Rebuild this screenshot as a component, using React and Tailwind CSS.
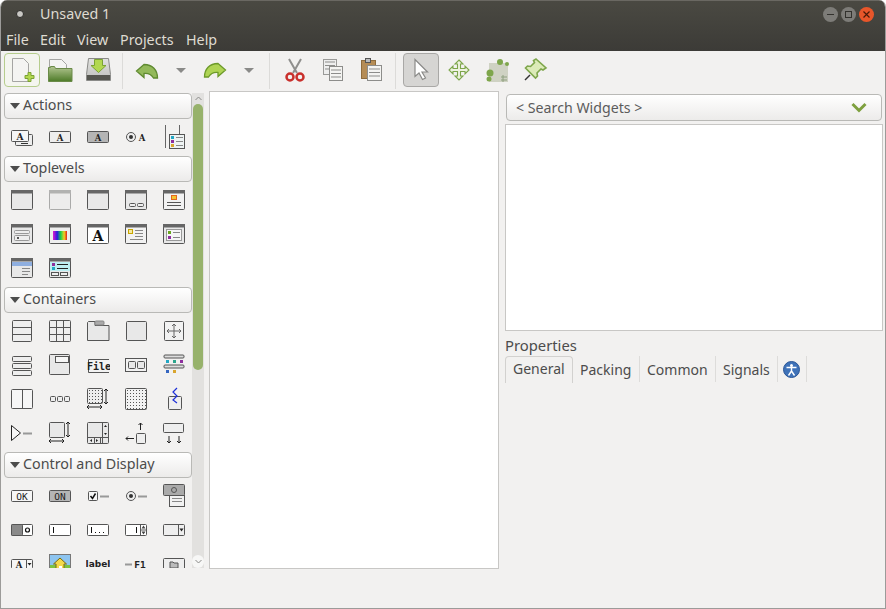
import React from "react";

const FONT = "font-['Noto_Sans',sans-serif]";

const Box = ({ children, w = 24, h = 24 }) => (
  <svg width={w} height={h} viewBox={`0 0 ${w} ${h}`} fill="none" stroke="#555" strokeWidth="1">
    {children}
  </svg>
);

const Glyph = ({ x, y, s = 10, c = "#222", serif = true, weight = 700, children }) => (
  <text
    x={x}
    y={y}
    fontSize={s}
    fontWeight={weight}
    fontFamily={serif ? "DejaVu Serif, serif" : "DejaVu Sans Mono, monospace"}
    fill={c}
    stroke="none"
    textAnchor="middle"
  >
    {children}
  </text>
);

const Win = ({ fill = "#e8e8e8", children }) => (
  <>
    <rect x="1.5" y="2.5" width="21" height="19" rx="1" fill={fill} />
    <rect x="1" y="2" width="22" height="3.5" fill="#666" stroke="none" />
    {children}
  </>
);

const Bar = ({ x, y, w, c = "#888" }) => <path d={`M${x} ${Number(y) + 0.5}h${w}`} stroke={c} />;
const Sq = ({ x, y, c, s = 3 }) => <rect x={x} y={y} width={s} height={s} fill={c} stroke="none" />;
const Arrow = ({ d, c = "#222" }) => <path d={d} stroke={c} />;

const dots = (x0, y0, nx, ny) => {
  const out = [];
  for (let i = 0; i < nx; i++) {
    for (let j = 0; j < ny; j++) {
      out.push(<rect key={`${i}-${j}`} x={x0 + i * 3} y={y0 + j * 3} width="1" height="1" fill="#555" stroke="none" />);
    }
  }
  return out;
};

const actions = [
  <>
    <rect x="5.5" y="9.5" width="17" height="11" rx="1" fill="#eee" />
    <rect x="1.5" y="5.5" width="17" height="11" rx="1" fill="#f6f6f6" />
    <Glyph x="10" y="14.500" s="9">A</Glyph>
    <Bar x="11" y="18" w="7" c="#333" />
  </>,
  <>
    <rect x="1.5" y="6.5" width="21" height="11" rx="1" fill="#eee" />
    <Glyph x="12" y="15.500" s="8.500">A</Glyph>
  </>,
  <>
    <rect x="1.5" y="6.5" width="21" height="11" rx="1" fill="#b5b5b5" />
    <Glyph x="12" y="15.500" s="8.500">A</Glyph>
  </>,
  <>
    <circle cx="7" cy="12" r="4.500" fill="#eee" />
    <circle cx="7" cy="12" r="2" fill="#333" stroke="none" />
    <Glyph x="18" y="15.500" s="8.500">A</Glyph>
  </>,
  <>
    <path d="M3.500 0v23M17.500 0v9" stroke="#666" />
    <rect x="7.500" y="9.500" width="15" height="14" fill="#eef3f3" />
    <Sq x="9" y="11" c="#22a6c4" />
    <Sq x="9" y="15" c="#8e2f9e" />
    <Sq x="9" y="19" c="#d9a52e" />
    <Bar x="14" y="12" w="7" />
    <Bar x="14" y="16" w="7" />
    <Bar x="14" y="20" w="7" />
  </>,
];

const toplevels = [
  <Win />,
  <g opacity="0.45"><Win /></g>,
  <Win />,
  <Win>
    <rect x="5.500" y="15.500" width="6" height="3" rx="1" fill="#eee" />
    <rect x="13.500" y="15.500" width="6" height="3" rx="1" fill="#eee" />
  </Win>,
  <Win fill="#f2f2f2">
    <rect x="9.500" y="7.500" width="5" height="4" fill="#f4c430" stroke="#e2661e" />
    <Bar x="5" y="14" w="14" c="#555" />
    <Bar x="5" y="17" w="14" c="#555" />
  </Win>,
  <Win>
    <rect x="4.500" y="8.500" width="15" height="3" rx="1" fill="#eee" stroke="#999" />
    <rect x="4.500" y="13.500" width="15" height="5" rx="1" fill="#eee" stroke="#999" />
    <Sq x="7" y="15" c="#555" s="2" />
  </Win>,
  <Win fill="#eee">
    <defs>
      <linearGradient id="rainbow" x1="0" x2="1" y1="0" y2="0">
        <stop offset="0" stopColor="#e01bd0" />
        <stop offset="0.3" stopColor="#2a1be0" />
        <stop offset="0.55" stopColor="#1bd04a" />
        <stop offset="0.8" stopColor="#f0d020" />
        <stop offset="1" stopColor="#e0201b" />
      </linearGradient>
    </defs>
    <rect x="5" y="9" width="14" height="9" fill="url(#rainbow)" stroke="none" />
  </Win>,
  <Win fill="#fff">
    <Glyph x="12" y="19" s="14" c="#111">A</Glyph>
  </Win>,
  <Win fill="#f2f2f2">
    <rect x="4.500" y="7.500" width="4" height="4" fill="#f4e8a0" stroke="#c7a500" />
    <Bar x="11" y="8" w="8" />
    <Bar x="11" y="11" w="8" />
    <Bar x="11" y="14" w="8" />
    <Bar x="6" y="17" w="13" />
  </Win>,
  <Win>
    <rect x="4.500" y="7.500" width="15" height="11" fill="#f6f6f6" stroke="#999" />
    <Sq x="6" y="9" c="#6aa51e" />
    <Sq x="6" y="14" c="#8e2f9e" />
    <Bar x="11" y="10" w="7" />
    <Bar x="11" y="15" w="7" />
  </Win>,
  <Win>
    <rect x="2" y="6" width="20" height="4" fill="#8fafe0" stroke="none" />
    <Bar x="12" y="12" w="8" />
    <Bar x="12" y="15" w="8" />
    <Bar x="12" y="18" w="6" />
  </Win>,
  <Win>
    <rect x="2" y="6" width="20" height="9" fill="#bdeef2" stroke="none" />
    <Sq x="4" y="7" c="#8e2f9e" />
    <Sq x="4" y="11" c="#22a6c4" />
    <Bar x="9" y="8" w="11" c="#222" />
    <Bar x="9" y="12" w="11" c="#222" />
    <rect x="3.500" y="16.500" width="7" height="3" fill="#eee" />
    <rect x="12.500" y="16.500" width="7" height="3" fill="#eee" />
  </Win>,
];

const containers = [
  <>
    <rect x="2.500" y="1.500" width="19" height="21" rx="1" fill="#eee" />
    <path d="M2.500 8.500h19M2.500 15.500h19" />
  </>,
  <>
    <rect x="1.500" y="1.500" width="21" height="21" rx="1" fill="#eee" />
    <path d="M8.500 1.500v21M15.500 1.500v21M1.500 8.500h21M1.500 15.500h21" />
  </>,
  <>
    <path d="M1.500 21.500v-18l1-1h6.500v4h14v15z" fill="#e8e8e8" />
    <rect x="9" y="2" width="9" height="4" rx="1" fill="#aaa" stroke="#888" />
  </>,
  <rect x="2.500" y="2.500" width="20" height="19" rx="1" fill="#e8e8e8" />,
  <>
    <rect x="2.500" y="2.500" width="19" height="19" rx="1" fill="#f2f2f2" />
    <path d="M12 5v14M5 12h14M10 7l2-2 2 2M10 17l2 2 2-2M7 10l-2 2 2 2M17 10l2 2-2 2" stroke="#666" />
  </>,
  <>
    <rect x="2.500" y="3.500" width="19" height="5" rx="1" fill="#eee" />
    <rect x="2.500" y="10.500" width="19" height="5" rx="1" fill="#eee" />
    <rect x="2.500" y="17.500" width="19" height="5" rx="1" fill="#eee" />
  </>,
  <>
    <rect x="1.500" y="1.500" width="20" height="20" rx="1" fill="#e8e8e8" />
    <rect x="7.500" y="3.500" width="13" height="6" fill="#f6f6f6" />
  </>,
  <>
    <path d="M23 6.500H2.500v13H23" fill="#f2f2f2" />
    <text x="13" y="16.500" fontSize="10" fontWeight="700" fontFamily="DejaVu Sans Mono, monospace" fill="#222" stroke="none" textAnchor="middle">File</text>
  </>,
  <>
    <rect x="1.500" y="5.500" width="21" height="13" fill="#f2f2f2" />
    <rect x="4.500" y="8.500" width="7" height="7" rx="1" fill="#e8e8e8" />
    <rect x="13.500" y="8.500" width="7" height="7" rx="1" fill="#e8e8e8" />
  </>,
  <>
    <rect x="2" y="2" width="20" height="3" rx="1" fill="#ddd" />
    <rect x="2" y="12" width="20" height="3" rx="1" fill="#ddd" />
    <Sq x="4" y="7" c="#22a6c4" />
    <Sq x="11" y="7" c="#2ca58d" />
    <Sq x="18" y="7" c="#8e2f9e" />
    <Sq x="4" y="17" c="#3565c0" />
    <Sq x="11" y="17" c="#d9a52e" />
  </>,
  <>
    <rect x="1.500" y="2.500" width="21" height="19" rx="1" fill="#f6f6f6" />
    <path d="M12.500 2.500v19" />
  </>,
  <>
    <rect x="2.500" y="9.500" width="5" height="5" rx="1" fill="#eee" />
    <rect x="9.500" y="9.500" width="5" height="5" rx="1" fill="#eee" />
    <rect x="16.500" y="9.500" width="5" height="5" rx="1" fill="#eee" />
  </>,
  <>
    <rect x="1.500" y="1.500" width="15" height="15" rx="1" fill="#eee" />
    {dots(3, 3, 5, 5)}
    <Arrow d="M20 2v15M18 4l2-2 2 2M18 15l2 2 2-2" />
    <Arrow d="M1 20h15M3 18l-2 2 2 2M14 18l2 2-2 2" />
  </>,
  <>
    <rect x="1.500" y="1.500" width="21" height="21" rx="1" fill="#f2f2f2" />
    {dots(3, 3, 7, 7)}
  </>,
  <>
    <rect x="6.500" y="9.500" width="13" height="13" rx="1" fill="#eee" />
    <path d="M15 1l-4 4 4 4-4 4 4 3" stroke="#1c2fd8" strokeWidth="1.200" />
  </>,
  <>
    <path d="M1.500 4.500v15l9-7.500z" fill="#f6f6f6" stroke="#222" />
    <path d="M13 12.500h9" stroke="#999" strokeWidth="2" />
  </>,
  <>
    <rect x="1.500" y="1.500" width="15" height="15" rx="1" fill="#e8e8e8" />
    <Arrow d="M20 1v15M18 3l2-2 2 2M18 14l2 2 2-2" />
    <Arrow d="M1 20h15M3 18l-2 2 2 2M14 18l2 2-2 2" />
  </>,
  <>
    <rect x="1.500" y="1.500" width="21" height="21" rx="1" fill="#e8e8e8" />
    <path d="M16.500 1.500v21M1.500 16.500h21" />
    <path d="M19.500 4l-1.500 2h3zM19.500 14l-1.500-2h3z" fill="#222" stroke="none" />
    <path d="M4 19.500l2-1.500v3zM12 19.500l-2-1.500v3z" fill="#222" stroke="none" />
    <path d="M8.500 16.500v6M14.500 16.500v6" />
  </>,
  <>
    <rect x="12.500" y="12.500" width="9" height="10" rx="1" fill="#eee" />
    <Arrow d="M16.500 9V2M14.500 4l2-2 2 2" />
    <Arrow d="M10 17.500H2M4 15.500l-2 2 2 2" />
  </>,
  <>
    <rect x="1.500" y="2.500" width="20" height="9" rx="1" fill="#eee" />
    <Arrow d="M7 15v7M5 20l2 2 2-2" />
    <Arrow d="M17 15v7M15 20l2 2 2-2" />
  </>,
];

const controls = [
  <>
    <rect x="1.500" y="6.500" width="21" height="11" rx="1" fill="#f6f6f6" />
    <Glyph x="12" y="15.500" s="9.500" serif={false} weight={400}>OK</Glyph>
  </>,
  <>
    <rect x="1.500" y="6.500" width="21" height="11" rx="1" fill="#b5b5b5" />
    <Glyph x="12" y="15.500" s="9.500" serif={false} weight={400}>ON</Glyph>
  </>,
  <>
    <rect x="2.500" y="7.500" width="9" height="9" rx="1" fill="#f6f6f6" />
    <path d="M4.500 12l2 2.500 3-5" stroke="#111" strokeWidth="1.500" />
    <path d="M14 12.500h9" stroke="#999" strokeWidth="2" />
  </>,
  <>
    <circle cx="7" cy="12" r="4.500" fill="#eee" />
    <circle cx="7" cy="12" r="2" fill="#333" stroke="none" />
    <path d="M14 12.500h9" stroke="#999" strokeWidth="2" />
  </>,
  <>
    <rect x="1.500" y="0.500" width="21" height="11" rx="1" fill="#aaa" />
    <circle cx="12" cy="6" r="2.500" />
    <rect x="7.500" y="11.500" width="15" height="11" fill="#f2f2f2" />
    <Bar x="10" y="14" w="10" />
    <Bar x="10" y="17" w="10" />
  </>,
  <>
    <rect x="1.500" y="6.500" width="21" height="11" rx="1" fill="#fff" />
    <rect x="1.500" y="6.500" width="11" height="11" rx="1" fill="#8a8a8a" />
    <circle cx="17.500" cy="12" r="2" stroke="#111" strokeWidth="1.200" />
  </>,
  <>
    <rect x="1.500" y="6.500" width="21" height="11" rx="1" fill="#fff" />
    <path d="M5.500 9v6" stroke="#111" />
  </>,
  <>
    <rect x="1.500" y="6.500" width="21" height="11" rx="1" fill="#fff" />
    <path d="M5.500 9v6" stroke="#111" />
    <path d="M9 14.500h1M13 14.500h1M17 14.500h1" stroke="#111" />
  </>,
  <>
    <rect x="1.500" y="6.500" width="21" height="11" rx="1" fill="#fff" />
    <path d="M12.500 9v6" stroke="#111" />
    <path d="M16.500 6.500v11M16.500 12h6" />
    <path d="M19.500 7.500l-2 3h4zM19.500 16.500l-2-3h4z" fill="#444" stroke="none" />
  </>,
  <>
    <rect x="1.500" y="6.500" width="21" height="11" rx="1" fill="#eee" />
    <path d="M16.500 6.500v11" />
    <path d="M17.500 10.500h4l-2 3z" fill="#222" stroke="none" />
  </>,
  <>
    <rect x="1.500" y="7.500" width="21" height="9" rx="1" fill="#f6f6f6" />
    <path d="M16.500 7.500v9" />
    <path d="M17.500 11h4l-2 2.500z" fill="#222" stroke="none" />
    <Glyph x="9" y="15.500" s="8.500">A</Glyph>
  </>,
  <>
    <rect x="1.500" y="2.500" width="21" height="20" fill="#8ec5f0" stroke="#777" />
    <path d="M2 13h20v9H2z" fill="#7dc242" stroke="none" />
    <path d="M5.500 12L12 6l6.500 6H16v10H8V12z" fill="#f3d94c" stroke="#7a6a10" />
    <rect x="11" y="14" width="3" height="8" fill="#fff" stroke="none" />
  </>,
  <text x="12" y="15" fontSize="9" fontWeight="700" fontFamily="DejaVu Sans, sans-serif" fill="#222" stroke="none" textAnchor="middle">label</text>,
  <>
    <path d="M1 12.500h7" stroke="#999" strokeWidth="2" />
    <Glyph x="16" y="15.500" s="9.500" serif={false}>F1</Glyph>
  </>,
  <>
    <rect x="1.500" y="6.500" width="21" height="14" rx="1" fill="#eee" />
    <path d="M8 10h3l1 1h4v5H8z" fill="#bbb" />
  </>,
];

const Section = ({ title, icons }) => (
  <>
    <div className="ml-px flex h-[26px] w-[188px] shrink-0 items-center rounded-[4px] border border-[#b9b9b6] bg-gradient-to-b from-white to-[#ecebea] pb-[2px] pl-[5px] text-[14.3px] text-[#4c4c4c]">
      <span className="mr-[3px] mt-[2px] h-0 w-0 border-x-[5px] border-t-[6px] border-x-transparent border-t-[#4c4c4c]" />
      {title}
    </div>
    <div className="grid w-[190px] shrink-0 auto-rows-[34px] grid-cols-[repeat(5,38px)] pb-[2px] pt-px">
      {icons.map((icon, i) => (
        <div key={i} className="flex items-center justify-center">
          <Box>{icon}</Box>
        </div>
      ))}
    </div>
  </>
);

const ToolBtn = ({ children, w = "w-[38px]", state }) => (
  <div className={`flex ${w} h-[34px] shrink-0 items-center justify-center`}>
    {state === "hover" && (
      <div className="flex h-[34px] w-[36px] items-center justify-center rounded-[4px] border border-[#b6cd8d] bg-[#f4f5ef]">
        {children}
      </div>
    )}
    {state === "active" && (
      <div className="flex h-[34px] w-[36px] items-center justify-center rounded-[4px] border border-[#a9a8a6] bg-[#d6d5d3]">
        {children}
      </div>
    )}
    {!state && children}
  </div>
);

const Sep = () => (
  <div className="flex h-[34px] w-[10px] shrink-0 justify-center">
    <div className="h-[36px] w-px bg-[#dcdbd9]" />
  </div>
);

const Drop = () => (
  <ToolBtn w="w-[30px]">
    <span className="h-0 w-0 border-x-[5px] border-t-[5px] border-x-transparent border-t-[#8a8a88]" />
  </ToolBtn>
);

const T = ({ children }) => (
  <svg width="32" height="32" viewBox="0 0 32 32" fill="none">
    {children}
  </svg>
);

const Page = ({ x, y, w, h }) => (
  <path d={`M${x + 0.5} ${y + 0.5}h${w - 5}l5 5v${h - 5}h-${w}z`} fill="#f4f4f2" stroke="#a5a5a3" />
);

const Lines = ({ x, y, w, n }) =>
  Array.from({ length: n }, (_, i) => <path key={i} d={`M${x} ${y + i * 3.5}h${w}`} stroke="#8d8d8b" />);

const toolIcons = {
  add: (
    <T>
      <Page x={6} y={4} w={16} h={23} />
      <path d="M22 18.500h3v3h3v3h-3v3h-3v-3h-3v-3h3z" fill="#b2d84f" stroke="#7ba233" />
    </T>
  ),
  open: (
    <T>
      <defs>
        <linearGradient id="folder" x1="0" x2="0" y1="0" y2="1">
          <stop offset="0" stopColor="#b3c691" />
          <stop offset="1" stopColor="#4d7a28" />
        </linearGradient>
      </defs>
      <Page x={5} y={5} w={17} h={16} />
      <path d="M4.500 13.500h2v-1h4l1 2h16.500v13h-23.500z" fill="url(#folder)" stroke="#6a8a48" />
    </T>
  ),
  save: (
    <T>
      <defs>
        <linearGradient id="disc" x1="0" x2="0" y1="0" y2="1">
          <stop offset="0" stopColor="#e2e2e0" />
          <stop offset="1" stopColor="#bdbdbb" />
        </linearGradient>
      </defs>
      <path d="M6.500 4.500h20l2 16v6h-24v-6z" fill="url(#disc)" stroke="#8a8a88" />
      <path d="M5 21h23v5H5z" fill="#55554f" />
      <path d="M12.500 5.500h8v6h3.500l-7.500 7-7.500-7h3.500z" fill="#b2d84f" stroke="#7ba233" />
    </T>
  ),
  undo: (
    <T>
      <path d="M13 10.500L5.500 17l7.500 6.500v-4c4-.5 7 .5 9.500 4.500h4c0-8-5-13.500-13.500-13.500z" fill="#93b95a" stroke="#5f8a30" strokeWidth="1.300" />
    </T>
  ),
  redo: (
    <T>
      <path d="M19 9.500L26.500 16 19 22.500v-4c-4-.5-7 .5-9.500 4.500h-4c0-8 5-13.500 13.500-13.500z" fill="#afd454" stroke="#6d9a2a" strokeWidth="1.300" />
    </T>
  ),
  cut: (
    <T>
      <path d="M10 5l8 14M22 5l-8 14" stroke="#8f8f8d" strokeWidth="2" />
      <circle cx="11" cy="23" r="3.500" stroke="#c9302c" strokeWidth="2.500" />
      <circle cx="21" cy="23" r="3.500" stroke="#c9302c" strokeWidth="2.500" />
    </T>
  ),
  copy: (
    <T>
      <rect x="6.500" y="5.500" width="13" height="15" fill="#eee" stroke="#9a9a98" />
      <Lines x={8} y={8} w={10} n={3} />
      <rect x="12.500" y="12.500" width="13" height="14" fill="#f4f4f2" stroke="#8d8d8b" />
      <Lines x={14} y={16} w={10} n={3} />
    </T>
  ),
  paste: (
    <T>
      <rect x="6.500" y="6.500" width="14" height="18" fill="#b58c55" stroke="#8f6c3c" />
      <rect x="10.500" y="4.500" width="5" height="4" fill="#bbb" stroke="#555" />
      <rect x="12.500" y="11.500" width="14" height="15" fill="#f4f4f2" stroke="#8d8d8b" />
      <Lines x={14} y={15} w={11} n={3} />
    </T>
  ),
  select: (
    <T>
      <path d="M10 5.500v17l4-3.500 3.500 6.500 3-1.500-3.500-6h5.500z" fill="#fff" stroke="#8a8a88" strokeWidth="1.200" />
    </T>
  ),
  move: (
    <T>
      <path d="M16 6l4 4h-2.500v4.500H22V12l4 4-4 4v-2.500h-4.500V22H20l-4 4-4-4h2.500v-4.500H10V20l-4-4 4-4v2.500h4.500V10H12z" fill="#eef3e0" stroke="#7ea64b" strokeWidth="1.100" />
    </T>
  ),
  resize: (
    <T>
      <rect x="8" y="9" width="19" height="19" fill="#cfd2c3" />
      <path d="M20 23h6M20 26h6M22 21v7" stroke="#8fa080" />
      <circle cx="19" cy="8" r="3" fill="#7ea64b" />
      <circle cx="9" cy="19" r="3.500" fill="#7ea64b" />
      <circle cx="8" cy="25" r="2.500" fill="#7ea64b" />
      <circle cx="26" cy="10" r="2" fill="#7ea64b" />
    </T>
  ),
  pin: (
    <T>
      <path d="M17 5l10 9-3 2-2-1-4 4 .5 3-2 2-10-10 2-2 3 .5 4-4-1-2z" fill="#dcebb8" stroke="#7ea64b" strokeWidth="1.600" />
      <path d="M6 26l5-5" stroke="#333" strokeWidth="1.500" />
    </T>
  ),
};

const Tab = ({ label, w, pl }) => (
  <div className={`flex h-[26px] items-center border-r border-[#dddcda] ${w} ${pl} text-[14px] text-[#4c4c4c]`}>
    {label}
  </div>
);

export default function App() {
  return (
    <div className={`${FONT} flex h-[609px] w-[886px] flex-col overflow-hidden rounded-t-[7px] border-x border-b border-[#9c9b99] bg-[#f2f1f0]`}>
      <div className="-mx-px h-[51px] shrink-0 border-t border-[#6a6862] bg-gradient-to-b from-[#4a4942] to-[#3c3b37] text-[14.3px] text-[#dfdbd2]">
        <div className="flex h-[26px] items-center pb-px pl-[14px] pr-[12px]">
          <span className="flex h-[12px] w-[12px] items-center justify-center">
            <span className="h-[8px] w-[8px] rounded-full border border-[#2a2926] bg-[#c9c8c4]" />
          </span>
          <span className="ml-[14px] flex-1">Unsaved 1</span>
          <div className="mt-px flex gap-[3px]">
            <span className="flex h-[15px] w-[15px] items-center justify-center rounded-full bg-[#7d7c78]">
              <span className="h-px w-[7px] bg-[#33322e]" />
            </span>
            <span className="flex h-[15px] w-[15px] items-center justify-center rounded-full bg-[#7d7c78]">
              <span className="h-[7px] w-[7px] border border-[#33322e]" />
            </span>
            <span className="flex h-[15px] w-[15px] items-center justify-center rounded-full bg-[#e8562a]">
              <svg width="7" height="7" viewBox="0 0 7 7" stroke="#4a1a08" strokeWidth="1.200"><path d="M0.500 0.500l6 6M6.500 0.500l-6 6" /></svg>
            </span>
          </div>
        </div>
        <div className="flex h-[24px] items-center pl-[6px] pt-px">
          <span className="w-[34px]">File</span>
          <span className="w-[37px]">Edit</span>
          <span className="w-[43px]">View</span>
          <span className="w-[66px]">Projects</span>
          <span>Help</span>
        </div>
      </div>

      <div className="flex h-[40px] shrink-0 items-start pl-[2px] pt-[2px]">
        <ToolBtn state="hover">{toolIcons.add}</ToolBtn>
        <ToolBtn>{toolIcons.open}</ToolBtn>
        <ToolBtn>{toolIcons.save}</ToolBtn>
        <Sep />
        <div className="w-px" />
        <ToolBtn>{toolIcons.undo}</ToolBtn>
        <Drop />
        <ToolBtn>{toolIcons.redo}</ToolBtn>
        <Drop />
        <Sep />
        <div className="w-[2px]" />
        <ToolBtn>{toolIcons.cut}</ToolBtn>
        <ToolBtn>{toolIcons.copy}</ToolBtn>
        <ToolBtn>{toolIcons.paste}</ToolBtn>
        <Sep />
        <div className="w-[2px]" />
        <ToolBtn state="active">{toolIcons.select}</ToolBtn>
        <ToolBtn>{toolIcons.move}</ToolBtn>
        <ToolBtn>{toolIcons.resize}</ToolBtn>
        <ToolBtn>{toolIcons.pin}</ToolBtn>
      </div>

      <div className="flex h-[478px] shrink-0">
        <aside className="mt-[2px] flex h-[475px] w-[191px] shrink-0 flex-col overflow-hidden pl-[2px]">
          <Section title="Actions" icons={actions} />
          <Section title="Toplevels" icons={toplevels} />
          <Section title="Containers" icons={containers} />
          <Section title="Control and Display" icons={controls} />
        </aside>

        <div className="mt-[2px] flex h-[475px] w-[12px] shrink-0 flex-col items-center bg-[#e2e1df]">
          <div className="flex h-[11px] items-center justify-center text-[#8a8a88]">
            <svg width="7" height="5" viewBox="0 0 7 5" fill="none" stroke="currentColor"><path d="M0.500 4l3-3 3 3" /></svg>
          </div>
          <div className="h-[266px] w-[10px] rounded-[5px] bg-[#97b26b]" />
          <div className="flex-1" />
          <div className="flex h-[13px] w-[12px] items-center justify-center rounded-full bg-[#f7f7f6] text-[#8a8a88]">
            <svg width="7" height="5" viewBox="0 0 7 5" fill="none" stroke="currentColor"><path d="M0.500 1l3 3 3-3" /></svg>
          </div>
        </div>

        <main className="ml-[5px] w-[290px] shrink-0 border border-[#c8c7c5] bg-white" />

        <section className="ml-[6px] flex w-[378px] shrink-0 flex-col">
          <div className="ml-px mt-[3px] flex h-[27px] w-[376px] items-center justify-between rounded-[4px] border border-[#b9b9b6] bg-gradient-to-b from-white to-[#ecebea] pl-[9px] pr-[14px] text-[14.2px] text-[#5c5c5c]">
            <span>&lt; Search Widgets &gt;</span>
            <svg width="16" height="11" viewBox="0 0 16 11" fill="none" stroke="#7ea03f" strokeWidth="3"><path d="M1.500 2l6.500 6.500L14.500 2" /></svg>
          </div>
          <div className="mt-[3px] h-[207px] border border-[#c8c7c5] bg-white" />
          <div className="mt-[4px] h-[21px] text-[14.8px] leading-[20px] text-[#4c4c4c]">Properties</div>
          <div className="flex">
            <div className="flex h-[27px] w-[68px] items-center rounded-t-[4px] border-x border-t border-[#d2d1cf] pb-[3px] pl-[7px] text-[14px] text-[#4c4c4c]">General</div>
            <Tab label="Packing" w="w-[67px]" pl="pl-[7px]" />
            <Tab label="Common" w="w-[76px]" pl="pl-[7px]" />
            <Tab label="Signals" w="w-[62px]" pl="pl-[7px]" />
            <div className="flex h-[26px] w-[29px] items-center justify-center border-r border-[#dddcda] pr-px">
              <svg width="17" height="17" viewBox="0 0 17 17">
                <circle cx="8.500" cy="8.500" r="8" fill="#3f72b8" stroke="#2a5596" />
                <circle cx="8.500" cy="4.500" r="1.500" fill="#fff" />
                <path d="M3.500 6.500h10M8.500 6.500v4M8.500 10l-3 4.500M8.500 10l3 4.500" stroke="#fff" strokeWidth="1.400" fill="none" />
              </svg>
            </div>
          </div>
        </section>
      </div>
    </div>
  );
}
